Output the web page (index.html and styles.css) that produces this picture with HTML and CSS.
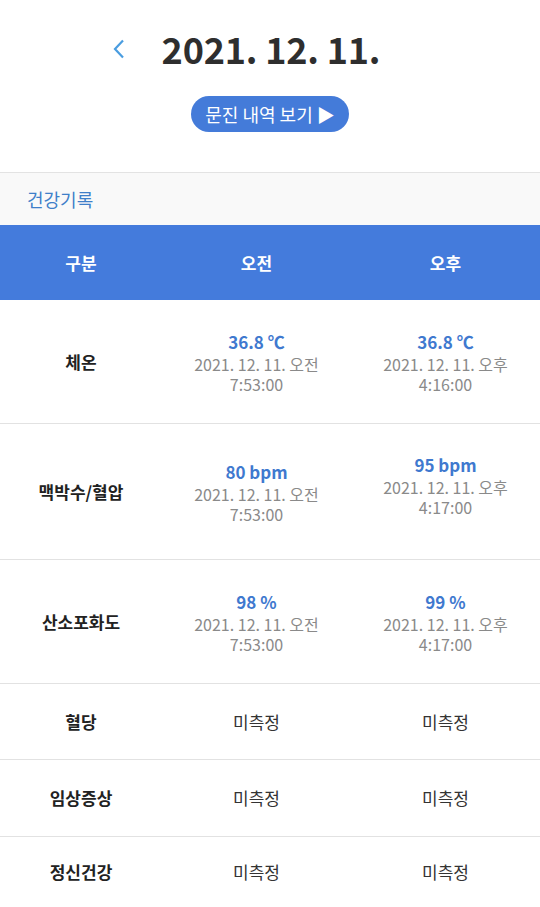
FILE: index.html
```html
<!DOCTYPE html>
<html>
	<head>
		<meta charset="utf-8">
		<title>건강기록</title>
		<link rel="stylesheet" href="styles.css">
	</head>
	<body>
		<div class="top">
			<div class="date-row">
				<a href="#" class="back">
					<svg width="14" height="20" viewBox="0 0 14 20"><path d="M11 1.5 L3 10 L11 18.5" fill="none" stroke="#4a9de0" stroke-width="2.2"/></svg>
				</a>
				<h1 class="date">2021. 12. 11.</h1>
			</div>
			<a href="#" class="history">문진 내역 보기 ▶</a>
		</div>
		<div class="section">건강기록</div>
		<table class="record">
			<thead>
				<tr><th class="c1">구분</th><th>오전</th><th>오후</th></tr>
			</thead>
			<tbody>
				<tr class="r-temp">
					<td class="name">체온</td>
					<td><div class="val">36.8 ℃</div><div class="time">2021. 12. 11. 오전<br>7:53:00</div></td>
					<td><div class="val">36.8 ℃</div><div class="time">2021. 12. 11. 오후<br>4:16:00</div></td>
				</tr>
				<tr class="r-pulse">
					<td class="name">맥박수/혈압</td>
					<td><div class="val">80 bpm</div><div class="time">2021. 12. 11. 오전<br>7:53:00</div></td>
					<td><div class="val">95 bpm</div><div class="time">2021. 12. 11. 오후<br>4:17:00</div><div class="bp"></div></td>
				</tr>
				<tr class="r-oxy">
					<td class="name">산소포화도</td>
					<td><div class="val">98 %</div><div class="time">2021. 12. 11. 오전<br>7:53:00</div></td>
					<td><div class="val">99 %</div><div class="time">2021. 12. 11. 오후<br>4:17:00</div></td>
				</tr>
				<tr class="r-none">
					<td class="name">혈당</td><td class="none">미측정</td><td class="none">미측정</td>
				</tr>
				<tr class="r-none">
					<td class="name">임상증상</td><td class="none">미측정</td><td class="none">미측정</td>
				</tr>
				<tr class="r-none last">
					<td class="name">정신건강</td><td class="none">미측정</td><td class="none">미측정</td>
				</tr>
			</tbody>
		</table>
	</body>
</html>
```

FILE: styles.css
```css
*{margin: 0; padding: 0; box-sizing: border-box;}
body{font-family: "Noto Sans CJK KR", "Noto Sans", sans-serif; background: #fff; color: #222;}
a{text-decoration: none;}

.top{height: 172px; display: flex; flex-direction: column; align-items: center; padding-top: 23px;}
.date-row{display: flex; align-items: center; margin-left: -48px;}
.back{display: flex; width: 14px; height: 20px; margin-right: 36px; margin-top: 2px;}
.date{font-size: 36px; font-weight: 700; color: #2e2e2e; line-height: 50px; letter-spacing: -0.2px;}
.history{margin-top: 23px; height: 36px; padding: 0 14px; border-radius: 18px; background: #447bd9;
	color: #fff; font-size: 18px; line-height: 36px;}

.section{height: 53px; border-top: 1px solid #e3e3e3; background: #f9f9f9; color: #3f7fc9;
	font-size: 18px; line-height: 52px; padding-left: 27px;}

.record{width: 100%; border-collapse: collapse; table-layout: fixed;}
.record th{height: 75px; background: #447bdc; color: #fff; font-size: 17px; font-weight: 700; width: 35%;}
.record th.c1{width: 30%;}
.record td{text-align: center; vertical-align: middle; border-bottom: 1.5px solid #e2e2e2;}
.record tr.last td{border-bottom: 1.5px solid #a9c1ea;}
.record .name{font-size: 17px; font-weight: 700; color: #222;}
.val{font-size: 17px; font-weight: 700; color: #3f79cf; line-height: 25px;}
.time{font-size: 16px; color: #8a8a8a; line-height: 20px;}
.bp{height: 13px;}
.none{font-size: 17px; color: #333;}

.r-temp td{height: 123px;}
.r-pulse td{height: 136px;}
.r-oxy td{height: 124px;}
.r-none td{height: 76.5px;}
.r-none.last td{height: 71px;}
```
